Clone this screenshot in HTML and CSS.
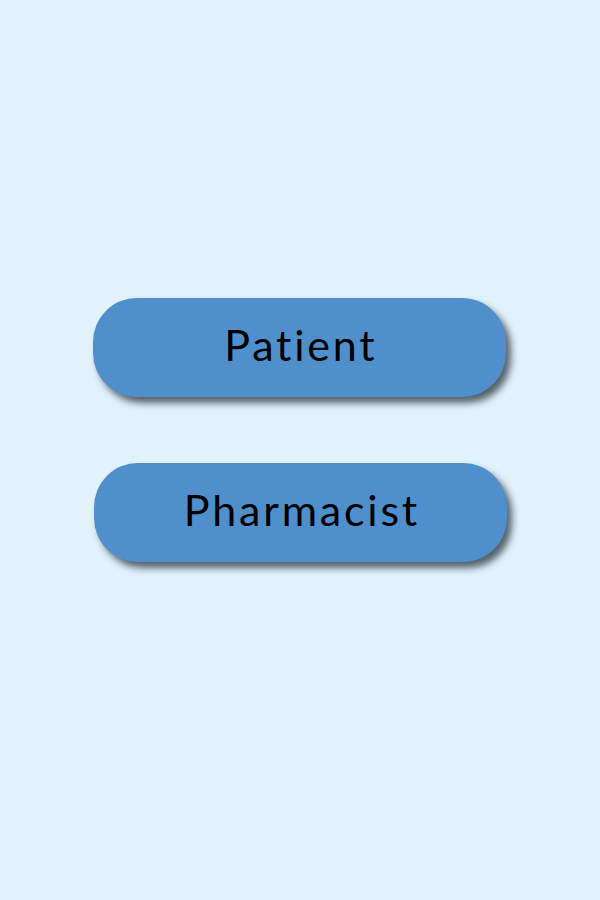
FILE: index.html
```html
<!DOCTYPE html>
<html>
<head>
<meta charset="utf-8">
<link rel="stylesheet" href="styles.css">
</head>
<body>
<main class="screen">
  <button class="role role-patient">Patient</button>
  <button class="role role-pharmacist">Pharmacist</button>
</main>
</body>
</html>
```
FILE: styles.css
```css
html, body {
  margin: 0;
  padding: 0;
  background: #e1f2fb;
}
.screen {
  width: 600px;
  height: 900px;
  display: flex;
  flex-direction: column;
  align-items: center;
  padding-top: 298px;
  box-sizing: border-box;
  gap: 66px;
}
.role {
  width: 413px;
  height: 99px;
  border: none;
  border-radius: 44px;
  background: #4f8fcc;
  color: #000;
  font-family: Lato, "Noto Sans", sans-serif;
  font-size: 43px;
  font-weight: 400;
  letter-spacing: 2.8px;
  text-indent: 2.8px;
  box-shadow: 5px 6px 7px rgba(40, 50, 60, 0.75);
  padding: 0 0 7px 0;
  cursor: pointer;
}
.role-patient {
  margin-left: -1px;
}
.role-pharmacist {
  margin-left: 1px;
}
```
